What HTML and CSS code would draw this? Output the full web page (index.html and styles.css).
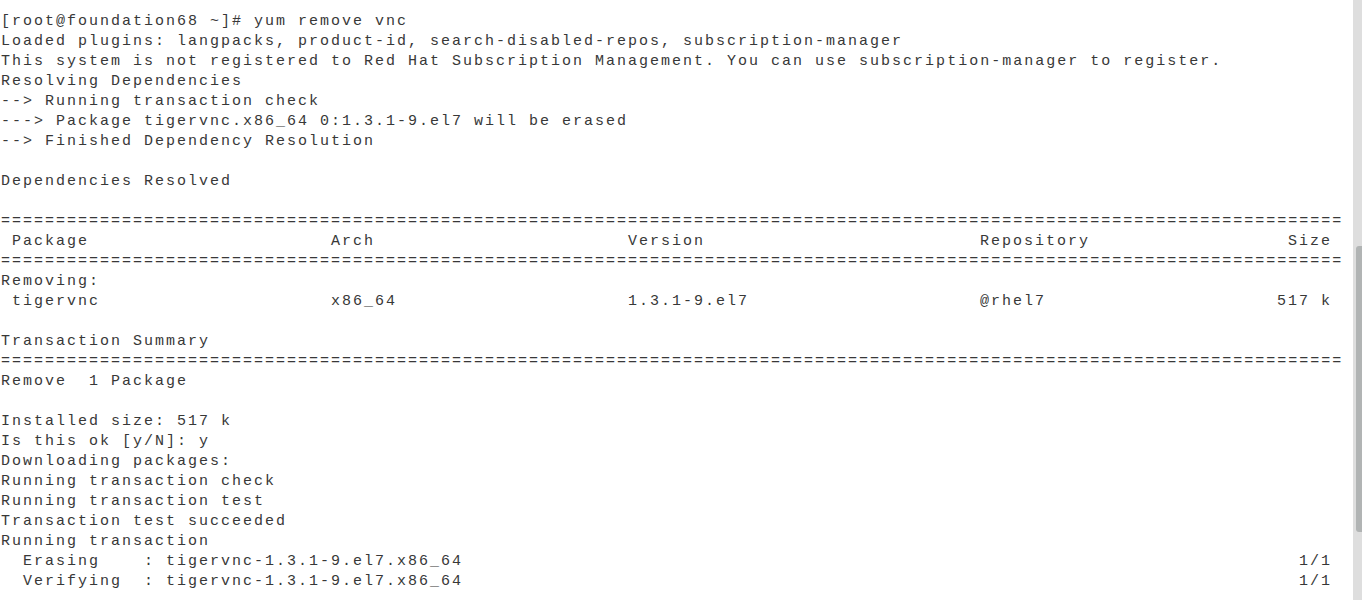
FILE: index.html
```html
<!DOCTYPE html>
<html>
<head>
<meta charset="utf-8">
<title>Terminal</title>
<link rel="stylesheet" href="styles.css">
</head>
<body>
<div class="term">
  <div class="screen">
    <div class="ln">[root@foundation68 ~]# yum remove vnc</div>
    <div class="ln">Loaded plugins: langpacks, product-id, search-disabled-repos, subscription-manager</div>
    <div class="ln">This system is not registered to Red Hat Subscription Management. You can use subscription-manager to register.</div>
    <div class="ln">Resolving Dependencies</div>
    <div class="ln">--&gt; Running transaction check</div>
    <div class="ln">---&gt; Package tigervnc.x86_64 0:1.3.1-9.el7 will be erased</div>
    <div class="ln">--&gt; Finished Dependency Resolution</div>
    <div class="ln"></div>
    <div class="ln">Dependencies Resolved</div>
    <div class="ln"></div>
    <div class="ln">==========================================================================================================================</div>
    <div class="ln trow"><span class="c1"> Package</span><span class="c2">Arch</span><span class="c3">Version</span><span class="c4">Repository</span><span class="c5">Size</span></div>
    <div class="ln">==========================================================================================================================</div>
    <div class="ln">Removing:</div>
    <div class="ln trow"><span class="c1"> tigervnc</span><span class="c2">x86_64</span><span class="c3">1.3.1-9.el7</span><span class="c4">@rhel7</span><span class="c5">517 k</span></div>
    <div class="ln"></div>
    <div class="ln">Transaction Summary</div>
    <div class="ln">==========================================================================================================================</div>
    <div class="ln">Remove  1 Package</div>
    <div class="ln"></div>
    <div class="ln">Installed size: 517 k</div>
    <div class="ln">Is this ok [y/N]: y</div>
    <div class="ln">Downloading packages:</div>
    <div class="ln">Running transaction check</div>
    <div class="ln">Running transaction test</div>
    <div class="ln">Transaction test succeeded</div>
    <div class="ln">Running transaction</div>
    <div class="ln prog"><span>  Erasing    : tigervnc-1.3.1-9.el7.x86_64</span><span>1/1</span></div>
    <div class="ln prog"><span>  Verifying  : tigervnc-1.3.1-9.el7.x86_64</span><span>1/1</span></div>
  </div>
  <div class="scrollbar"><div class="thumb"></div></div>
</div>
</body>
</html>
```
FILE: styles.css
```css
html, body {
  margin: 0;
  padding: 0;
  background: #ffffff;
}

.term {
  display: flex;
  width: 1362px;
  height: 600px;
  overflow: hidden;
}

.screen {
  flex: 1;
  padding: 12px 0 0 1px;
  font-family: "Liberation Mono", "DejaVu Sans Mono", monospace;
  font-size: 15px;
  letter-spacing: 2px;
  line-height: 20px;
  color: #383838;
}

.ln {
  height: 20px;
  white-space: pre;
}

.trow {
  display: flex;
}

.trow span {
  white-space: pre;
  flex: none;
}

.c1 { width: 330px; }
.c2 { width: 297px; }
.c3 { width: 352px; }
.c4 { width: 297px; }
.c5 { width: 55px; text-align: right; }

.prog {
  display: flex;
  justify-content: space-between;
  width: 1331px;
}

.prog span {
  white-space: pre;
}

.scrollbar {
  width: 9px;
  flex: none;
  background: #dedede;
  padding-top: 246px;
  box-sizing: border-box;
}

.thumb {
  margin-left: 3px;
  height: 286px;
  background: #b1b4b4;
  border-top-left-radius: 3px;
  border-bottom-left-radius: 3px;
}
```
